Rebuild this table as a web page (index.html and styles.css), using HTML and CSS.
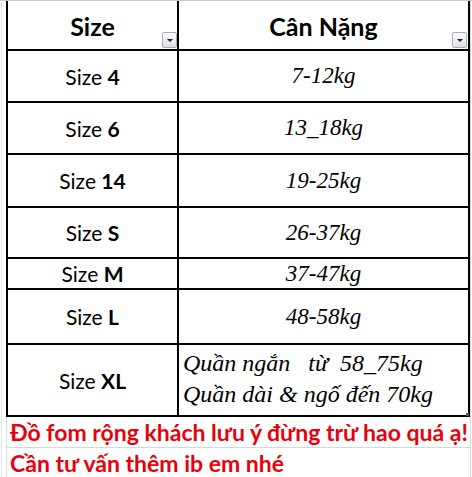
FILE: index.html
```html
<!DOCTYPE html>
<html lang="vi">
<head>
<meta charset="utf-8">
<title>Bảng size</title>
<link rel="stylesheet" href="styles.css">
</head>
<body>
<div class="sheet">
  <div class="table">
    <div class="cell head">Size<span class="filter"></span></div>
    <div class="cell head">Cân Nặng<span class="filter"></span></div>

    <div class="cell size"><span>Size <b>4</b></span></div>
    <div class="cell val">7-12kg</div>

    <div class="cell size"><span>Size <b>6</b></span></div>
    <div class="cell val">13_18kg</div>

    <div class="cell size"><span>Size <b>14</b></span></div>
    <div class="cell val">19-25kg</div>

    <div class="cell size"><span>Size <b>S</b></span></div>
    <div class="cell val">26-37kg</div>

    <div class="cell size"><span>Size <b>M</b></span></div>
    <div class="cell val">37-47kg</div>

    <div class="cell size"><span>Size <b>L</b></span></div>
    <div class="cell val">48-58kg</div>

    <div class="cell size"><span>Size <b>XL</b></span></div>
    <div class="cell val multi">
      <span class="line">Quần ngắn   từ  58_75kg</span>
      <span class="line">Quần dài &amp; ngố đến 70kg</span>
      <span class="handle"></span>
    </div>
  </div>
  <div class="notes">
    <div class="note">Đồ fom rộng khách lưu ý đừng trừ hao quá ạ!</div>
    <div class="note">Cần tư vấn thêm ib em nhé</div>
  </div>
</div>
</body>
</html>
```

FILE: styles.css
```css
* { box-sizing: border-box; }
html, body { margin: 0; padding: 0; background: #fff; }
body { width: 472px; height: 477px; overflow: hidden; }

.sheet {
  border-top: 1px solid #c3ccd6;
  position: relative;
  height: 477px;
  background:
    linear-gradient(#e2e4e6, #e2e4e6) 1px 0 / 1px 100% no-repeat,
    linear-gradient(#d6d8da, #d6d8da) 470px 0 / 1px 100% no-repeat,
    #fff;
}

.table {
  margin-left: 6px;
  width: 464px;
  display: grid;
  grid-template-columns: 171px 291px;
  grid-template-rows: 50px 52px 52px 53px 51px 31px 55px 72px;
  border-left: 2px solid #000;
  background: #fff;
}

.cell {
  position: relative;
  border-right: 2px solid #000;
  border-bottom: 2px solid #000;
  display: flex;
  align-items: center;
  justify-content: center;
  color: #000;
}

.head {
  font-family: Lato, "Open Sans", sans-serif;
  font-weight: 700;
  font-size: 25px;
  padding-top: 2px;
}

.filter {
  position: absolute;
  right: 0;
  bottom: 1px;
  width: 15px;
  height: 16px;
  border: 1px solid #a8adb3;
  border-radius: 2px;
  background: linear-gradient(#fbfcfd, #dde1e6);
}
.cell.head:nth-child(2) .filter { right: 1px; }
.filter::after {
  content: "";
  position: absolute;
  left: 4px;
  top: 6px;
  border-left: 3px solid transparent;
  border-right: 3px solid transparent;
  border-top: 3px solid #222;
}

.size {
  font-family: Lato, "Open Sans", sans-serif;
  font-size: 21px;
  white-space: pre;
}
.size b { font-weight: 700; }

.val {
  font-family: "Liberation Serif", "Times New Roman", serif;
  font-style: italic;
  font-size: 23px;
}

.multi {
  flex-direction: column;
  align-items: flex-start;
  justify-content: center;
  padding-left: 4px;
  padding-bottom: 2px;
  font-size: 24px;
  line-height: 31px;
}
.line { white-space: pre; }

.handle {
  position: absolute;
  right: -1px;
  bottom: -1px;
  width: 3px;
  height: 3px;
  background: #3a5a9a;
}

.notes {
  margin-left: 6px;
  width: 464px;
  border-left: 1px solid #dcdedf;
}
.note {
  height: 31px;
  border-bottom: 1px solid #d6d9dc;
  font-family: Lato, "Open Sans", sans-serif;
  font-weight: 700;
  font-size: 23px;
  line-height: 30px;
  color: #e8000b;
  padding-left: 3px;
  white-space: nowrap;
  background: #fff;
}
```
